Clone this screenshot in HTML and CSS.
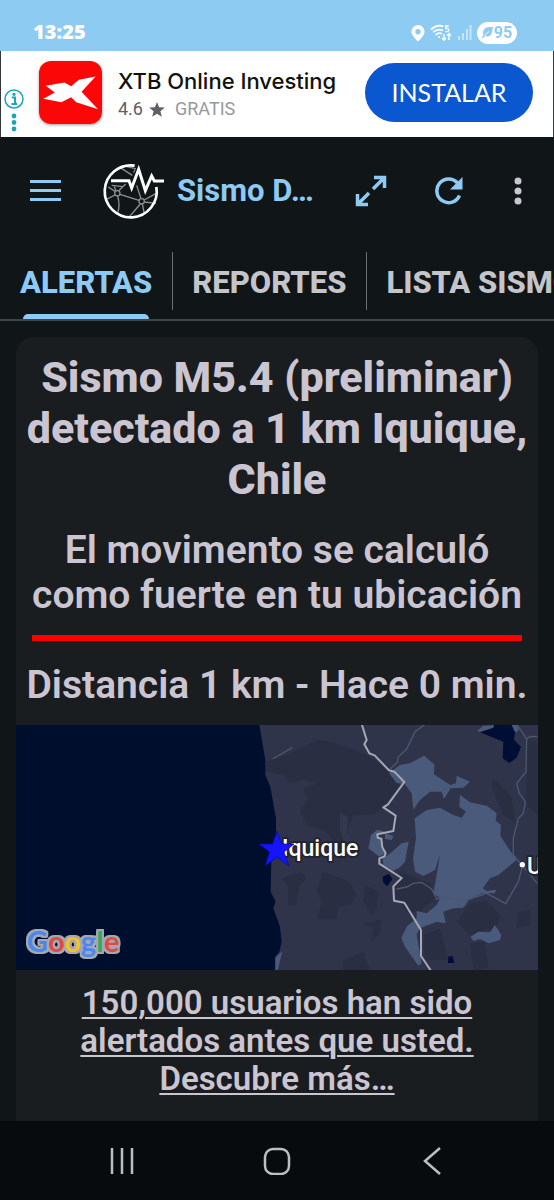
FILE: index.html
```html
<!DOCTYPE html>
<html lang="es">
<head>
<meta charset="utf-8">
<meta name="viewport" content="width=device-width, initial-scale=1">
<title>Sismo Detector</title>
<link rel="stylesheet" href="styles.css">
</head>
<body>
<div class="phone">
  <div class="status">
    <time class="clock">13:25</time>
    <div class="status-icons">
      <svg width="14" height="17" viewBox="0 0 14 17"><path fill="#fff" fill-rule="evenodd" d="M7 0a6.600 6.600 0 0 0-6.600 6.600C.4 11 7 16.500 7 16.500s6.600-5.500 6.600-9.900A6.600 6.600 0 0 0 7 0Zm0 4a2.700 2.700 0 1 1 0 5.400A2.700 2.700 0 0 1 7 4Z"/></svg>
      <svg width="22" height="18" viewBox="0 0 22 18" fill="none" stroke="#fff" stroke-width="1.700"><path d="M1 5.500Q7 0 13.500 2.500M3.300 8.200Q8 4 13 6.500M5.600 11Q9 8 12 10"/><circle cx="9" cy="13" r="1" fill="#fff" stroke="none"/><path stroke-width="1.400" d="M18.800 2H15.800V4.500Q18.800 4 18.800 6Q18.500 8 15.300 7.500M14 10v6M12 14l2 2.300 2-2.300M19 16v-6M17 11.800l2-2.300 2 2.300"/></svg>
      <svg width="15" height="16" viewBox="0 0 15 16" stroke="#fff" stroke-width="2"><path opacity=".5" d="M2 11v4M6 8v7M10 4v11M13.500 0v15"/></svg>
      <span class="battery">
        <svg width="11" height="12" viewBox="0 0 11 12"><path fill="#8dcbf2" d="M11 0Q3-.5 1.500 3.500C.5 6 1.500 8 1.500 8L0 10.500 1.200 11.200 3 9Q8 10.500 9.500 6.500Q10.300 4 11 0Z"/><path d="M2.500 8.500 7 4.500" stroke="#fff"/></svg>95
      </span>
    </div>
  </div>

  <aside class="ad">
    <div class="ad-marks">
      <svg width="20" height="20" viewBox="0 0 20 20"><circle cx="10" cy="10" r="9" fill="none" stroke="#1ba6b8" stroke-width="1.500"/><circle cx="10" cy="5.300" r="1.600" fill="#1ba6b8"/><path d="M8 8.500h3V15M7.500 15h5.500" fill="none" stroke="#1ba6b8" stroke-width="2"/></svg>
      <svg width="6" height="19" viewBox="0 0 6 19" fill="#1ba6b8"><circle cx="3" cy="3" r="2.400"/><circle cx="3" cy="9.500" r="2.400"/><circle cx="3" cy="16" r="2.400"/></svg>
    </div>
    <svg class="ad-logo" viewBox="117 183 188 188"><rect x="117" y="183" width="188" height="188" fill="#fb0707"/><path fill="#fff" d="M137 257 193 247 213 258 236 239 286 229 244 275 293 327 228 306 213 291 184 306 130 296 164 277Z"/></svg>
    <div class="ad-text">
      <div class="ad-title">XTB Online Investing</div>
      <div class="ad-meta"><span>4.6</span><svg width="16" height="15" viewBox="0 0 16 15"><path fill="#5d6064" d="M8 0l2.100 5.200 5.700.4-4.400 3.600 1.400 5.600L8 11.700l-4.800 3.100 1.400-5.600L.2 5.600l5.700-.4Z"/></svg><span class="ad-price">GRATIS</span></div>
    </div>
    <button class="install" type="button">INSTALAR</button>
  </aside>

  <header class="appbar">
    <button class="icon-btn menu" type="button" aria-label="Menú"><svg width="31" height="22" viewBox="0 0 31 22" stroke="#8dcbf5" stroke-width="3"><path d="M0 1.500h31M0 10.500h31M0 19.500h31"/></svg></button>
    <svg class="logo" viewBox="0 0 240 210" fill="none">
      <g stroke="#8d9092" stroke-width="4"><circle cx="67" cy="112" r="8"/><circle cx="140" cy="136" r="8"/><path d="M60 106 40 93M71 104 92 84M63 104 58 92M60 117 34 130M68 120Q76 148 68 171M75 115 132 133M138 128 125 88M147 132 184 112M148 138 183 142M136 144 104 181M142 144 148 174M76 35 112 58M92 31 122 38 116 50M50 88 84 92"/></g>
      <path d="M119 29A78 78 0 1 0 184 93" stroke="#fff" stroke-width="8"/>
      <path d="M48 74H98L110 97 131 40 151 103 170 60 178 75H207" stroke="#101518" stroke-width="17"/>
      <path d="M48 74H102L110 96 131 40 151 104 170 60 178 75H207" stroke="#fff" stroke-width="9"/>
    </svg>
    <h1 class="app-title">Sismo D…</h1>
    <button class="icon-btn expand" type="button" aria-label="Ampliar"><svg width="32" height="32" viewBox="0 0 32 32" fill="none" stroke="#8dcbf5" stroke-width="3.500"><path d="M19 2.500h10.500V13M29 3 18 14M2.500 19v10.500H13M3 29 14 18"/></svg></button>
    <button class="icon-btn refresh" type="button" aria-label="Actualizar"><svg width="28" height="28" viewBox="0 0 28 28"><path d="M24.500 18.500A11.800 11.800 0 1 1 22.500 6" fill="none" stroke="#8dcbf5" stroke-width="3.500"/><path fill="#8dcbf5" d="M27.500 0v12.500H15Z"/></svg></button>
    <button class="icon-btn more" type="button" aria-label="Más opciones"><svg width="8" height="28" viewBox="0 0 8 28" fill="#c8c8ce"><circle cx="4" cy="4" r="3.500"/><circle cx="4" cy="14" r="3.500"/><circle cx="4" cy="24" r="3.500"/></svg></button>
  </header>

  <nav class="tabs">
    <a class="tab active" href="#alertas">ALERTAS</a>
    <a class="tab" href="#reportes">REPORTES</a>
    <a class="tab" href="#lista">LISTA SISMOS</a>
  </nav>

  <main class="content">
    <article class="card">
      <h2 class="headline">Sismo M5.4 (preliminar) detectado a 1 km Iquique, Chile</h2>
      <p class="intensity">El movimento se calculó como fuerte en tu ubicación</p>
      <hr class="rule">
      <p class="distance">Distancia 1 km - Hace 0 min.</p>
      <svg class="map" viewBox="0 0 522 245" role="img" aria-label="Mapa de Iquique">
        <rect width="522" height="245" fill="#000e2d"/>
        <g transform="translate(224 -10) scale(.33334)">
          <path fill="#30344b" d="M58 30 76 135 76 180 91 215 108 310 108 390 94 440 92 530 107 560 100 580 120 635 125 680 118 710 106 725 106 766H900V30Z"/>
          <g fill="#2a2e42">
            <path d="M76 140 105 132 140 120 190 95 230 75 280 82 330 100 390 125 440 165 484 201 430 276 400 300 340 300 320 350 345 420 300 410 260 350 200 330 180 290 205 250 190 220 230 205 190 195 150 205 130 180 80 170Z"/>
            <path d="M126 488 185 472 200 492 180 510 165 574 145 570 144 515ZM250 470 300 490 330 500 350 540 330 570 295 575 290 613 232 613 245 560 230 530ZM375 510 415 530 410 580 395 600 370 560ZM368 625 425 613 420 650 395 680 400 640ZM480 470 570 505 590 545 540 590 500 590 465 540ZM650 620 690 565 740 558 780 600 770 640 720 650 690 660ZM760 190 815 245 825 320 790 300 755 215ZM835 590 870 585 870 630 830 640ZM550 660 600 640 625 735 555 735ZM690 685 735 680 745 760 700 766ZM310 735 370 710 390 766H310ZM860 70 892 80V300L860 270Z"/>
          </g>
          <path fill="#34384e" d="M300 290 325 310 320 350 345 390 325 405 300 350Z"/>
          <g fill="#4a5a7a">
            <path d="M447 175 480 150 510 145 552 122 583 148 582 178 630 210 648 205 650 182 690 200 670 218 632 220 612 252 605 230 570 230 540 255 520 284 515 235 495 208 470 204Z"/>
            <path fill-rule="evenodd" d="M524 310 560 285 600 278 640 300 665 308 678 290 658 275 660 240 690 262 740 272 770 295 767 317 783 330 781 362 805 400 830 435 775 480 750 490 728 520 740 528 768 524 765 535 730 534 690 550 670 578 640 580 610 590 617 625 590 620 540 640 530 660 545 745 535 752 495 695 484 668 500 635 530 610 530 588 560 595 590 570 600 550 580 535 590 480 600 420 585 465 550 483 525 470 519 430 528 370Z"/>
            <path d="M385 400 393 360 412 344 435 350 413 360 415 370 424 375 425 400 437 415 418 425ZM435 355 460 363 455 375 435 372ZM427 427 445 420 485 385 506 380 495 440 480 457 460 467 430 450ZM692 665 715 650 750 652 765 630 784 660 780 675 745 685 720 672 700 678ZM106 728 127 708 113 766H106ZM712 48 730 32 765 30V40L720 50ZM810 30H835V48L825 52Z"/>
          </g>
          <path fill="#000e35" d="M720 52 760 38 762 30H815L825 52 822 75 843 95 830 128 808 144 788 130 790 80ZM428 485 447 476 457 492 442 514 430 503ZM625 724H638L643 744H624Z"/>
          <path fill="none" stroke="#4a5870" stroke-width="4" d="M98 132 157 98M553 30 525 50 500 102 475 126 472 142 450 162M835 35 860 72 858 170 830 205 838 235 856 260 850 295 835 310 820 370V420L845 449 892 505M892 65 870 64 858 74M847 455 835 500 797 566 740 535 680 555 640 552 620 545 590 552 575 522 545 502 520 505 500 516 470 522"/>
          <path fill="none" stroke="#a5a8b5" stroke-width="6" stroke-linejoin="round" d="M366 30 380 75 373 88 388 115 404 121 447 166 463 170 493 201 444 268 430 277 467 302 460 348 412 358 413 368 424 371 427 397 437 415 433 424 418 430V446L485 489 460 514 462 557 493 563 543 645V723L572 766"/>
          <circle cx="847" cy="449" r="8" fill="#fff"/>
        </g>
        <g class="map-label"><text x="266" y="131">Iquique</text><text x="511" y="149">Uyuni</text></g>
        <path fill="#1414ff" stroke="#0707a0" stroke-width=".7" d="M261 106 265.500 119H278L268 127 273 141 261 132 249 141 253.500 127 243 119H256.500Z"/>
        <text class="google" x="11" y="227"><tspan fill="#4a86ee">G</tspan><tspan fill="#df4b43">o</tspan><tspan fill="#f6c02d">o</tspan><tspan fill="#4a86ee">g</tspan><tspan fill="#3aa757">l</tspan><tspan fill="#df4b43">e</tspan></text>
      </svg>
      <a class="more-link" href="#descubre">150,000 usuarios han sido alertados antes que usted. Descubre más…</a>
    </article>
  </main>

  <footer class="navbar">
    <button class="nav-btn" type="button" aria-label="Recientes"><svg width="28" height="28" viewBox="0 0 28 28" stroke="#bcbfc2" stroke-width="2.500"><path d="M4 1v26M14 1v26M24 1v26"/></svg></button>
    <button class="nav-btn" type="button" aria-label="Inicio"><svg width="28" height="28" viewBox="0 0 28 28" fill="none" stroke="#bcbfc2" stroke-width="2.500"><rect x="2" y="2" width="24" height="25" rx="8"/></svg></button>
    <button class="nav-btn" type="button" aria-label="Atrás"><svg width="28" height="28" viewBox="0 0 28 28" fill="none" stroke="#bcbfc2" stroke-width="2.500"><path d="M22 1 7 14 22 27"/></svg></button>
  </footer>
</div>
</body>
</html>
```

FILE: styles.css
```css
* { box-sizing: border-box; }
body { margin: 0; background: #101518; font-family: Roboto, "Liberation Sans", sans-serif; }
button { border: 0; padding: 0; background: none; font: inherit; color: inherit; }
svg { display: block; flex: none; }
h1, h2, p { margin: 0; }

.phone { display: flex; flex-direction: column; min-height: 100vh; }

.status { display: flex; justify-content: space-between; align-items: flex-end; height: 51px; padding: 0 37px 7px 33px; background: #8dcbf2; color: #fff; }
.clock { font: 800 20px/24px "Open Sans", sans-serif; }
.status-icons { display: flex; align-items: center; gap: 5px; }
.battery { display: flex; align-items: center; justify-content: center; gap: 1px; width: 40px; height: 22px; border-radius: 11px; background: #fff; color: #8dcbf2; font: 700 16px/22px Roboto, sans-serif; }

.ad { display: flex; align-items: center; height: 86px; padding: 0 20px 0 3px; background: #fff; border: solid #33383b; border-width: 0 1px; }
.ad-marks { display: flex; flex-direction: column; align-items: center; gap: 4px; width: 20px; padding-top: 32px; }
.ad-logo { width: 63px; height: 63px; margin: 0 16px 4px 15px; border-radius: 12px; box-shadow: 0 1px 3px #0006; }
.ad-text { flex: 1; min-width: 0; white-space: nowrap; }
.ad-title { color: #111; font: 500 22px/30px Inter, sans-serif; }
.ad-meta { display: flex; align-items: center; gap: 6px; color: #5d6064; font-size: 18px; line-height: 26px; }
.ad-price { margin-left: 4px; color: #96999d; }
.install { width: 168px; height: 59px; margin-bottom: 3px; border-radius: 30px; background: #0b57d0; color: #fff; font: 400 25px/59px Lato, sans-serif; }

.appbar { display: flex; align-items: center; height: 107px; padding: 0 32px 0 30px; }
.icon-btn { flex: none; }
.logo { width: 80px; height: 70px; margin: 0 2px 0 34px; }
.app-title { flex: 1; min-width: 0; overflow: hidden; white-space: nowrap; color: #8dcbf5; font-size: 31px; line-height: 40px; }
.expand { margin-right: 48px; }
.refresh { margin-right: 51px; }

.tabs { display: flex; height: 77px; border-bottom: 2px solid #404447; overflow: hidden; }
.tab { position: relative; flex: none; padding: 21px 20px 0; color: #c3c5ca; font-size: 31px; line-height: 36px; font-weight: 800; text-decoration: none; }
.tab + .tab::before { content: ""; position: absolute; left: 0; top: 8px; width: 1px; height: 58px; background: #6c7073; }
.active { color: #8dcbf5; }
.active::after { content: ""; position: absolute; left: 23px; right: 23px; bottom: 0; height: 5px; border-radius: 5px 5px 0 0; background: #8dcbf5; }

.content { flex: 1; display: flex; padding: 16px 16px 0; }
.card { flex: 1; min-width: 0; background: #1a1d20; border-radius: 18px 18px 0 0; color: #cbc5d2; text-align: center; }
.headline { padding: 15px 4px 0; font-size: 43px; line-height: 51px; font-weight: 800; }
.intensity { padding: 23px 12px 0; font-size: 39px; line-height: 45px; font-weight: 600; }
.rule { height: 6px; margin: 17px 16px 0; border: 0; background: #f00; }
.distance { padding: 22px 0 17px; font-size: 39px; line-height: 45px; font-weight: 600; white-space: nowrap; }
.map { width: 100%; height: auto; }
.map-label { fill: #fff; stroke: #22252e; stroke-width: 4px; paint-order: stroke; stroke-linejoin: round; font: 500 23px Roboto, sans-serif; }
.google { font: 700 29px Lato, sans-serif; filter: drop-shadow(2px 0 0 #a3a8b2) drop-shadow(-2px 0 0 #a3a8b2) drop-shadow(0 2px 0 #a3a8b2) drop-shadow(0 -2px 0 #a3a8b2); }
.more-link { display: block; padding: 14px 60px 23px; color: inherit; font-size: 33px; line-height: 38px; font-weight: 600; text-decoration-thickness: 2px; text-underline-offset: 3px; }

.navbar { display: flex; align-items: center; justify-content: space-around; height: 79px; padding: 0 44px; background: #070b0e; }
.nav-btn { display: flex; justify-content: center; flex: 1; }
```
